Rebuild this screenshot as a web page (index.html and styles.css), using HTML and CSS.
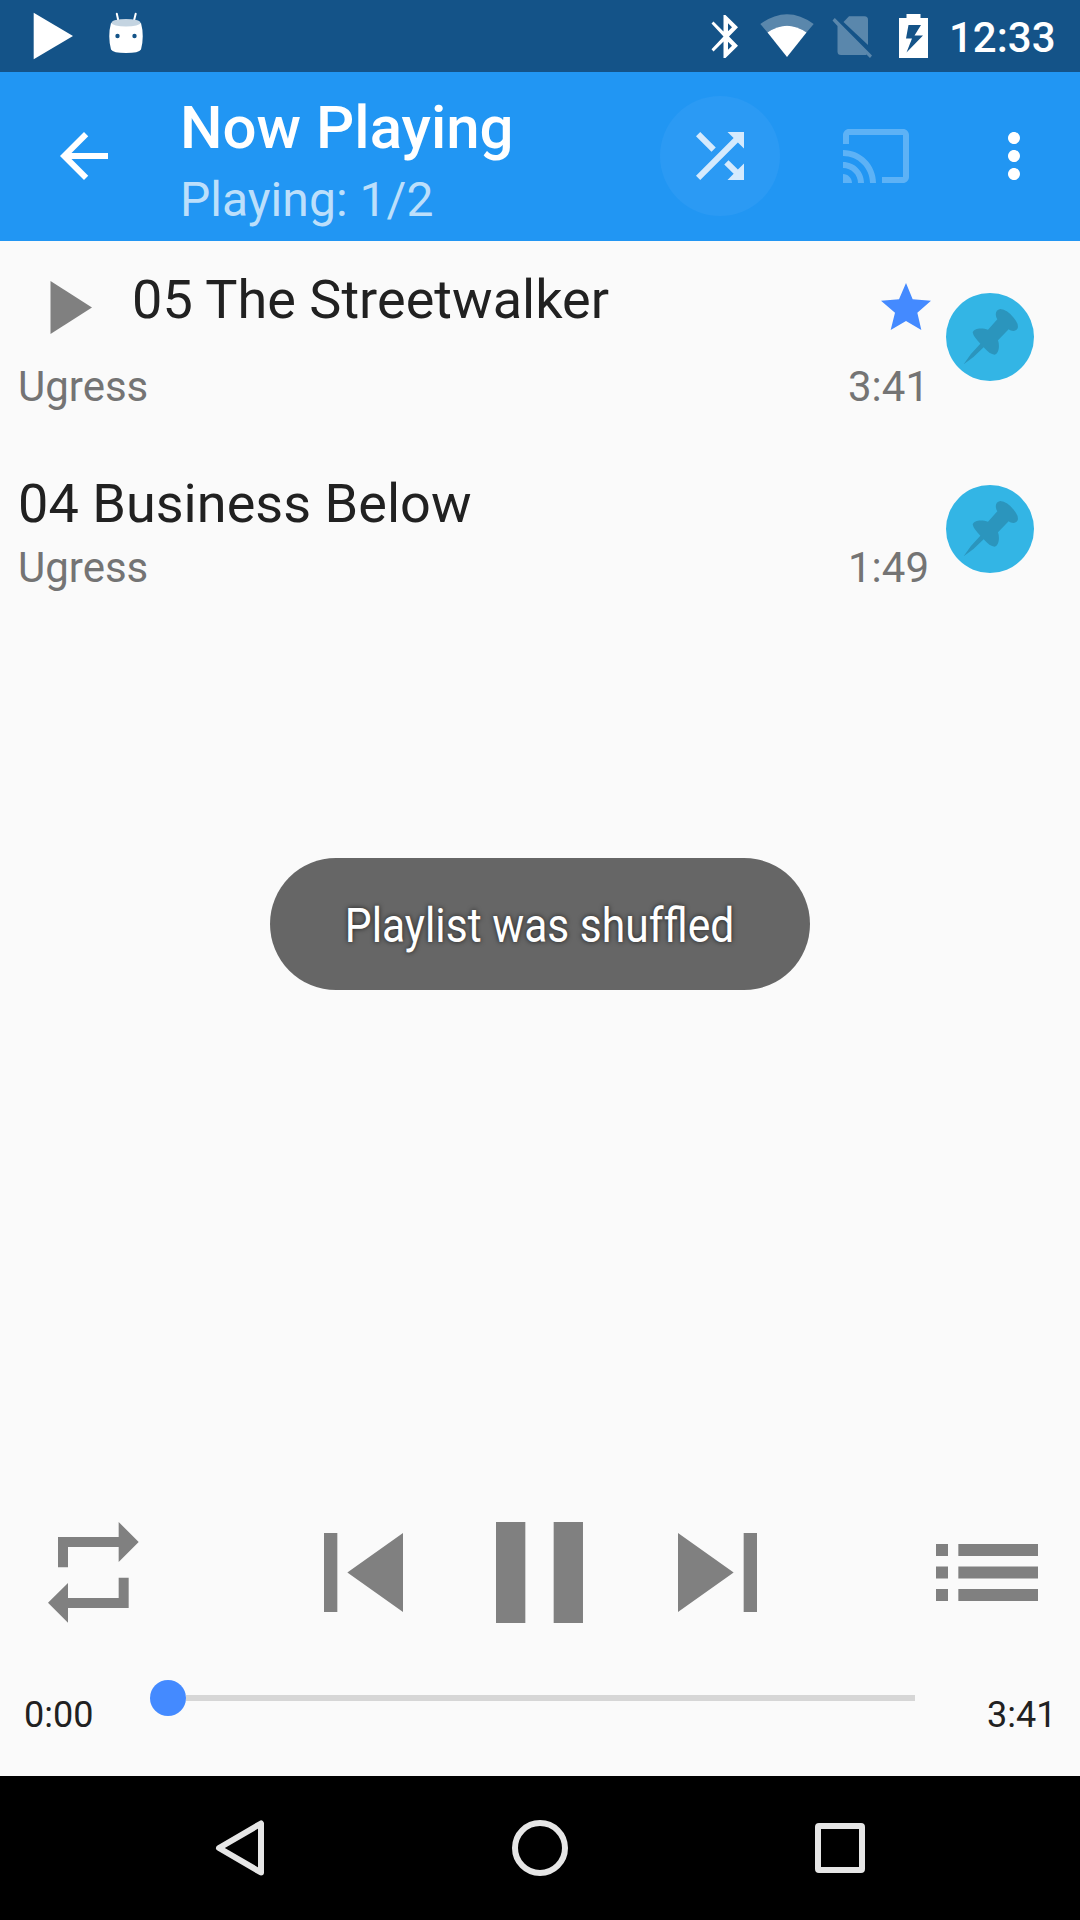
FILE: index.html
```html
<!DOCTYPE html>
<html lang="en">
<head>
<meta charset="utf-8">
<title>Now Playing</title>
<link rel="stylesheet" href="styles.css">
</head>
<body>
<div class="screen">
  <div class="status-bar">
    <svg class="notif-play" viewBox="0 0 60 72"><path d="M8.700 12.700V59.300L48 36Z"/></svg>
    <svg class="notif-robot" viewBox="0 0 48 72">
      <path d="M8.800 13.700L10.300 20.500M27.700 13.700L26 20.500" stroke="#fff" stroke-width="2" stroke-linecap="round"/>
      <path d="M3 23Q18 26 33 23Q36.500 36 33 49.500Q31 53 18 53Q5 53 3 49.500Q-0.500 36 3 23Z"/>
      <ellipse cx="18" cy="22.800" rx="14.500" ry="3.800" fill="#c4d4e1"/>
      <circle cx="9.500" cy="36" r="2.200" fill="#145388"/><circle cx="26.500" cy="36" r="2.200" fill="#145388"/>
    </svg>
    <div class="status-right">
      <svg class="st-bluetooth" viewBox="0 0 27 72"><path d="M0.500 23.500L2.500 21.500L12.500 31.500V15H14.500L27 27.200L18 36.500L27 45.800L14.500 58H12.500V41.500L2.500 51.500L0.500 49.300L12.500 36.500ZM17 23.200V31.300L21 27.200ZM17 41.700V49.800L21 45.800Z" fill-rule="evenodd"/></svg>
      <svg class="st-wifi" viewBox="0 0 54 72"><path d="M0.300 24Q27 4.500 53.700 24L46.500 32.500Q27 19 7.500 32.500Z" fill-opacity=".3"/><path d="M7.500 32.500Q27 19 46.500 32.500L27 57Z"/></svg>
      <svg class="st-sim" viewBox="0 0 40 72" fill-opacity=".3"><path d="M11.500 22L17 16.300H32.500Q36 16.300 36 20V45Z"/><path d="M0.500 20.500L2.800 18L40 55.500L38 58L34.500 54.500Q34 55 33 55H9Q5.500 55 5.500 51.500V26Z"/></svg>
      <svg class="st-battery" viewBox="0 0 29 72"><path d="M7.500 14H21.500V18H29V58H0V18H7.500ZM9.500 25L7 38.500H13L7.500 52.500L24 35.500H15.500L22 25Z" fill-rule="evenodd"/></svg>
      <span class="clock">12:33</span>
    </div>
  </div>

  <div class="app-bar">
    <svg class="back" viewBox="0 0 24 24"><path d="M20 11H7.830l5.590-5.590L12 4l-8 8 8 8 1.410-1.410L7.830 13H20v-2z"/></svg>
    <div class="heading">
      <h1>Now Playing</h1>
      <p>Playing: 1/2</p>
    </div>
    <div class="shuffle"><svg viewBox="0 0 24 24"><path d="M10.590 9.170L5.410 4 4 5.410l5.170 5.170 1.420-1.410zM14.500 4l2.040 2.040L4 18.590 5.410 20 17.960 7.460 20 9.500V4h-5.500zm.33 9.410l-1.410 1.410 3.130 3.130L14.500 20H20v-5.500l-2.040 2.040-3.130-3.130z"/></svg></div>
    <svg class="cast" viewBox="0 0 24 24"><path d="M21 3H3c-1.100 0-2 .9-2 2v3h2V5h18v14h-7v2h7c1.100 0 2-.9 2-2V5c0-1.100-.9-2-2-2zM1 18v3h3c0-1.660-1.340-3-3-3zm0-4v2c2.760 0 5 2.240 5 5h2c0-3.870-3.130-7-7-7zm0-4v2c4.970 0 9 4.030 9 9h2c0-6.080-4.930-11-11-11z"/></svg>
    <svg class="more" viewBox="0 0 24 24"><path d="M12 8c1.100 0 2-.9 2-2s-.9-2-2-2-2 .9-2 2 .9 2 2 2zm0 2c-1.100 0-2 .9-2 2s.9 2 2 2 2-.9 2-2-.9-2-2-2zm0 6c-1.100 0-2 .9-2 2s.9 2 2 2 2-.9 2-2-.9-2-2-2z"/></svg>
  </div>

  <div class="tracks">
    <div class="track current">
      <div class="info">
        <div class="line title-line">
          <svg class="playing" viewBox="0 0 42 53"><path d="M0.500 0V53L42 26.500Z"/></svg>
          <span class="title">05 The Streetwalker</span>
          <svg class="star" viewBox="183 70 150 141"><path d="M258 70L278 119L333 123L292 159L304 211L258 184L212 211L225 159L183 123L237 119Z"/></svg>
        </div>
        <div class="line meta"><span>Ugress</span><span class="duration">3:41</span></div>
      </div>
      <svg class="pin" viewBox="378 99 264 264"><circle cx="510" cy="231" r="132"/><path d="M431 313Q452 279 481 251Q460 230 458 217C462 203 488 203 504 209L532 178C524 165 526 149 541 147Q562 149 581 173Q597 192 593 205C588 215 575 215 566 208L534 241C540 258 536 281 524 284C514 284 503 276 491 262Q463 292 431 313Z"/></svg>
    </div>
    <div class="track">
      <div class="info">
        <div class="line title-line"><span class="title">04 Business Below</span></div>
        <div class="line meta"><span>Ugress</span><span class="duration">1:49</span></div>
      </div>
      <svg class="pin" viewBox="378 99 264 264"><circle cx="510" cy="231" r="132"/><path d="M431 313Q452 279 481 251Q460 230 458 217C462 203 488 203 504 209L532 178C524 165 526 149 541 147Q562 149 581 173Q597 192 593 205C588 215 575 215 566 208L534 241C540 258 536 281 524 284C514 284 503 276 491 262Q463 292 431 313Z"/></svg>
    </div>
  </div>

  <div class="controls">
    <svg class="repeat" viewBox="143 65 273 303"><path d="M173 110H355V65L415 125L355 185V140H203V201H173ZM385 232V323H203V367L143 307L203 248V293H355V232Z"/></svg>
    <svg class="prev" viewBox="971 97 237 237"><path d="M971 97h40v237h-40zM1208 97V334L1041 215.500Z"/></svg>
    <svg class="pause" viewBox="168 64 261 304"><path d="M168 64h88v304h-88zM341 64h88v304h-88z"/></svg>
    <svg class="next" viewBox="712 97 237 237"><path d="M909 97h40v237h-40zM712 97V334L879 215.500Z"/></svg>
    <svg class="queue" viewBox="168 129 306 171"><path d="M168 129h36v36h-36zM235 129h239v36h-239zM168 196.500h36v36h-36zM235 196.500h239v36h-239zM168 264h36v36h-36zM235 264h239v36h-239z"/></svg>
  </div>

  <div class="seek">
    <span class="elapsed">0:00</span>
    <div class="slider"><div class="thumb"></div><div class="rail"></div></div>
    <span class="total">3:41</span>
  </div>

  <div class="nav-bar">
    <svg viewBox="0 0 72 72"><path d="M57 11.500V60.500L15 36Z"/></svg>
    <svg viewBox="0 0 72 72"><circle cx="36" cy="36" r="25"/></svg>
    <svg viewBox="0 0 72 72"><rect x="14" y="14" width="44" height="44" rx="1"/></svg>
  </div>

  <div class="toast"><span>Playlist was shu<span class="plain">f</span>fled</span></div>
</div>
</body>
</html>
```
FILE: styles.css
```css
* { box-sizing: border-box; }
body { margin: 0; font-family: Roboto, sans-serif; }
h1, p { margin: 0; }
svg { display: block; flex: none; }

.screen {
  position: relative;
  display: flex;
  flex-direction: column;
  width: 1080px;
  height: 1920px;
  overflow: hidden;
  background: #fafafa;
}

/* status bar */
.status-bar { display: flex; height: 72px; background: #145388; fill: #fff; }
.status-bar svg { height: 72px; }
.notif-play { width: 60px; margin-left: 24.500px; }
.notif-robot { width: 48px; margin-left: 23.500px; }
.status-right { display: flex; margin-left: auto; padding-right: 24px; }
.st-bluetooth { width: 27px; margin-right: 22px; }
.st-wifi { width: 54px; margin-right: 18px; }
.st-sim { width: 40px; margin-right: 27px; }
.st-battery { width: 29px; }
.clock { width: 107px; margin-left: 21px; font-size: 42px; font-weight: 500; line-height: 75px; color: #fff; }

/* app bar */
.app-bar { display: flex; height: 169px; background: #2196f3; fill: #fff; }
.app-bar svg { width: 72px; height: 72px; }
.app-bar .back { margin: 48px 60px 0 48px; }
.heading { flex: 1; padding-top: 20px; white-space: nowrap; }
.heading h1 { font-size: 60px; font-weight: 500; line-height: 72px; color: #fff; }
.heading p { margin-top: 8px; font-size: 48px; line-height: 56px; letter-spacing: .05px; color: #bcdffb; }
.shuffle { width: 120px; height: 120px; margin-top: 24px; padding: 24px; border-radius: 50%; background: #2b9af4; fill: #d5eafd; }
.app-bar .cast { margin: 48px 0 0 60px; fill-opacity: .27; }
.app-bar .more { margin: 48px 30px 0 66px; }

/* track list */
.tracks { flex: 1; }
.track { display: flex; padding-left: 18px; }
.track .info { width: 928px; }
.line { display: flex; }
.title-line { height: 71px; }
.title { font-size: 54px; line-height: 64px; letter-spacing: .04px; color: #212121; white-space: nowrap; }
.meta { justify-content: space-between; padding-right: 18px; font-size: 42px; line-height: 50px; color: #747474; }
.duration { width: 80px; }
.current { height: 192px; padding-top: 27px; }
.current .title-line { height: 94px; }
.playing { width: 42px; height: 53px; margin: 13px 40px 0 32px; fill: #808080; }
.star { width: 50px; height: 47px; margin: 15px 15px 0 auto; fill: #448aff; }
.pin { width: 88px; height: 88px; margin-top: 25px; }
.pin circle { fill: #33b5e5; }
.pin path { fill: #2b95bd; }
.track + .track { padding-top: 39px; }
.track + .track .pin { margin-top: 13px; }

/* transport controls */
.controls { display: flex; align-items: center; height: 101px; margin-bottom: 53.300px; fill: #808080; }
.repeat { width: 91px; height: 101px; margin-left: 47.500px; }
.prev, .next { width: 79px; height: 79px; }
.prev { margin-left: 185px; }
.pause { width: 87px; height: 101.300px; margin-left: 93.500px; }
.next { margin-left: 94.500px; }
.queue { width: 102px; height: 57px; margin-left: 179.500px; }

/* seek bar */
.seek { display: flex; height: 100px; font-size: 36px; color: #212121; }
.seek span { margin-top: 18px; line-height: 42px; }
.elapsed { width: 126px; margin-left: 24px; }
.slider { display: flex; align-items: center; width: 765px; height: 44px; }
.thumb { width: 36px; height: 36px; border-radius: 50%; background: #448aff; }
.rail { flex: 1; height: 6px; background: #d6d6d6; }
.total { margin-left: 72px; }

/* navigation bar */
.nav-bar { display: flex; justify-content: space-between; align-items: center; height: 144px; padding: 0 204px; background: #000; }
.nav-bar svg { width: 72px; height: 72px; fill: none; stroke: #e6e6e6; stroke-width: 6; stroke-linejoin: round; }

.toast {
  position: absolute;
  left: 270px;
  top: 858px;
  display: flex;
  align-items: center;
  justify-content: center;
  width: 540px;
  height: 132px;
  padding-top: 2px;
  border-radius: 66px;
  background: #666;
  color: #fff;
  font-size: 48px;
  text-shadow: 0 0 6px rgba(0, 0, 0, .7);
  white-space: nowrap;
}
.toast > span { transform: scaleX(.887); }
.toast .plain { font-variant-ligatures: none; }
```
